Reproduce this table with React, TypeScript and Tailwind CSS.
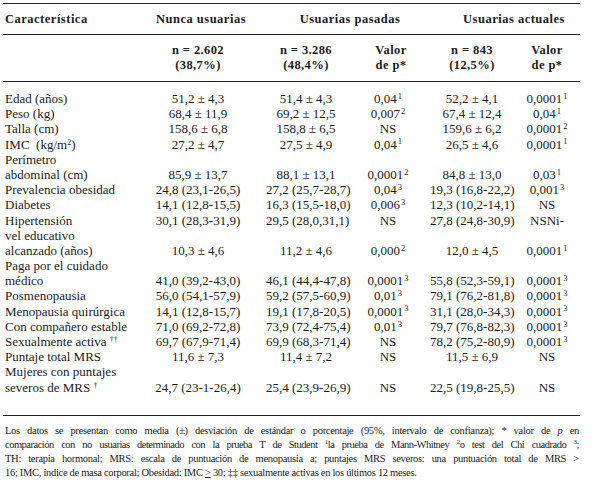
import type { ReactNode } from "react";

type Row = {
  label: ReactNode;
  v?: ReactNode[];
};

const sup = (t: string, s: string) => (
  <>
    {t}
    <sup className="text-[8.5px] ml-[1px]">{s}</sup>
  </>
);

const rows: Row[] = [
  { label: "Edad (años)", v: ["51,2 ± 4,3", "51,4 ± 4,3", sup("0,04", "1"), "52,2 ± 4,1", sup("0,0001", "1")] },
  { label: "Peso (kg)", v: ["68,4 ± 11,9", "69,2 ± 12,5", sup("0,007", "2"), "67,4 ± 12,4", sup("0,04", "1")] },
  { label: "Talla (cm)", v: ["158,6 ± 6,8", "158,8 ± 6,5", "NS", "159,6 ± 6,2", sup("0,0001", "2")] },
  {
    label: <>IMC&nbsp; (kg/m<sup className="text-[8px]">2</sup>)</>,
    v: ["27,2 ± 4,7", "27,5 ± 4,9", sup("0,04", "1"), "26,5 ± 4,6", sup("0,0001", "1")],
  },
  { label: "Perímetro" },
  { label: "abdominal (cm)", v: ["85,9 ± 13,7", "88,1 ± 13,1", sup("0,0001", "2"), "84,8 ± 13,0", sup("0,03", "1")] },
  { label: "Prevalencia obesidad", v: ["24,8 (23,1-26,5)", "27,2 (25,7-28,7)", sup("0,04", "3"), "19,3 (16,8-22,2)", sup("0,001", "3")] },
  { label: "Diabetes", v: ["14,1 (12,8-15,5)", "16,3 (15,5-18,0)", sup("0,006", "3"), "12,3 (10,2-14,1)", "NS"] },
  { label: "Hipertensión", v: ["30,1 (28,3-31,9)", "29,5 (28,0,31,1)", "NS", "27,8 (24,8-30,9)", "NSNi-"] },
  { label: "vel educativo" },
  { label: "alcanzado (años)", v: ["10,3 ± 4,6", "11,2 ± 4,6", sup("0,000", "2"), "12,0 ± 4,5", sup("0,0001", "1")] },
  { label: "Paga por el cuidado" },
  { label: "médico", v: ["41,0 (39,2-43,0)", "46,1 (44,4-47,8)", sup("0,0001", "3"), "55,8 (52,3-59,1)", sup("0,0001", "3")] },
  { label: "Posmenopausia", v: ["56,0 (54,1-57,9)", "59,2 (57,5-60,9)", sup("0,01", "3"), "79,1 (76,2-81,8)", sup("0,0001", "3")] },
  { label: "Menopausia quirúrgica", v: ["14,1 (12,8-15,7)", "19,1 (17,8-20,5)", sup("0,0001", "3"), "31,1 (28,0-34,3)", sup("0,0001", "3")] },
  { label: "Con compañero estable", v: ["71,0 (69,2-72,8)", "73,9 (72,4-75,4)", sup("0,01", "3"), "79,7 (76,8-82,3)", sup("0,0001", "3")] },
  {
    label: <>Sexualmente activa <sup className="text-[8px]">††</sup></>,
    v: ["69,7 (67,9-71,4)", "69,9 (68,3-71,4)", "NS", "78,2 (75,2-80,9)", sup("0,0001", "3")],
  },
  { label: "Puntaje total MRS", v: ["11,6 ± 7,3", "11,4 ± 7,2", "NS", "11,5 ± 6,9", "NS"] },
  { label: "Mujeres con puntajes" },
  {
    label: <>severos de MRS <sup className="text-[8px]">†</sup></>,
    v: ["24,7 (23-1-26,4)", "25,4 (23,9-26,9)", "NS", "22,5 (19,8-25,5)", "NS"],
  },
];

const grid = "grid grid-cols-[127px_136px_80px_84px_84px_66px]";

export default function App() {
  return (
    <div className="w-[594px] h-[490px] bg-white text-[#1c1c1c] overflow-hidden" style={{ fontFamily: '"Liberation Serif", "DejaVu Serif", serif' }}>
      <div className="ml-[3px] w-[577px] pt-[3px]">
        {/* header */}
        <div className={`${grid} h-[31px] items-center border-t border-[#222] font-bold text-[12.5px] tracking-[0.5px]`}>
          <div className="pl-[2px]">Característica</div>
          <div className="text-center pl-[6px]">Nunca usuarias</div>
          <div className="col-span-2 text-center pl-[4px]">Usuarias pasadas</div>
          <div className="col-span-2 text-center pl-[18px]">Usuarias actuales</div>
        </div>
        <div className={`${grid} h-[48px] items-center border-t border-b border-[#222] font-bold text-[12.5px] leading-[15px] tracking-[0.4px]`}>
          <div />
          <div className="text-center">n = 2.602<br />(38,7%)</div>
          <div className="text-center">n = 3.286<br />(48,4%)</div>
          <div className="text-center pl-[6px]">Valor<br />de p*</div>
          <div className="text-center">n = 843<br />(12,5%)</div>
          <div className="text-center">Valor<br />de p*</div>
        </div>

        {/* body */}
        <div className="pt-[9px] pb-[20px] border-b border-[#222] text-[13px] leading-[15.2px]">
          {rows.map((r, i) => (
            <div key={i} className={`${grid} h-[15.2px] whitespace-nowrap`}>
              <div className="pl-[2px]">{r.label}</div>
              {(r.v ?? ["", "", "", "", ""]).map((c, j) => (
                <div key={j} className="text-center">{c}</div>
              ))}
            </div>
          ))}
        </div>

        {/* footnote */}
        <div className="pt-[8px] text-[10.5px] leading-[14px] pl-[2px] pr-[1px] whitespace-nowrap tracking-[-0.3px]">
          <div className="text-justify [text-align-last:justify]">
            Los datos se presentan como media (±) desviación de estándar o porcentaje (95%, intervalo de confianza); * valor de <i>p</i> en
          </div>
          <div className="text-justify [text-align-last:justify] tracking-[-0.5px]">
            comparación con no usuarias determinado con la prueba T de Student <sup className="text-[7px]">1</sup>la prueba de Mann-Whitney <sup className="text-[7px]">2</sup>o test del Chi cuadrado <sup className="text-[7px]">3</sup>;
          </div>
          <div className="text-justify [text-align-last:justify]">
            TH: terapia hormonal; MRS: escala de puntuación de menopausia a; puntajes MRS severos: una puntuación total de MRS &gt;
          </div>
          <div>
            16; IMC, índice de masa corporal; Obesidad: IMC <span className="underline">&gt;</span> 30; ‡‡ sexualmente activas en los últimos 12 meses.
          </div>
        </div>
      </div>
    </div>
  );
}
